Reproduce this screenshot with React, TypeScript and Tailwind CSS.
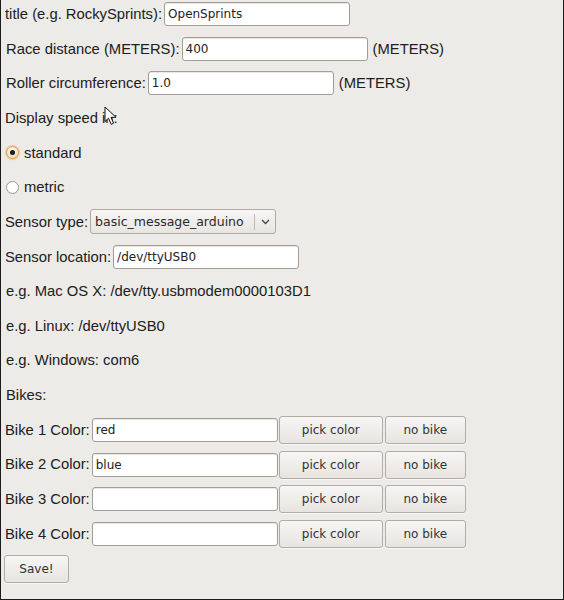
import React from "react";

const labelFont = { fontFamily: '"Liberation Sans", Arial, sans-serif' };
const fieldFont = { fontFamily: '"DejaVu Sans", Verdana, sans-serif' };

function TextBox({ value = "" }: { value?: string }) {
  return (
    <input
      readOnly
      value={value}
      style={fieldFont}
      className="ml-[2px] h-[24px] w-[186px] rounded-[3px] border border-[#a39d96] bg-white px-[3px] text-[12px] text-[#222] shadow-[inset_0_1px_1px_rgba(0,0,0,0.10)] outline-none"
    />
  );
}

function Btn({ children, width }: { children: React.ReactNode; width: string }) {
  return (
    <button
      style={fieldFont}
      className={`h-[28px] ${width} rounded-[3px] border border-[#b2aca5] bg-gradient-to-b from-[#f7f6f4] to-[#e7e4e0] text-[12px] text-[#2e3436] shadow-[0_1px_0_rgba(255,255,255,0.6)]`}
    >
      {children}
    </button>
  );
}

function Row({ children }: { children: React.ReactNode }) {
  return <div className="flex h-[24px] items-center whitespace-nowrap">{children}</div>;
}

function Radio({ checked }: { checked?: boolean }) {
  if (checked) {
    return (
      <span className="flex h-[13px] w-[13px] items-center justify-center rounded-full border border-[#e09a3c] bg-gradient-to-b from-[#fbf3e6] to-[#f1dcbc] shadow-[0_0_1px_1px_rgba(240,160,60,0.45)]">
        <span className="h-[5px] w-[5px] rounded-full bg-[#1f1f1f]" />
      </span>
    );
  }
  return <span className="h-[13px] w-[13px] rounded-full border border-[#9d978f] bg-white" />;
}

function Cursor() {
  return (
    <svg
      className="pointer-events-none absolute left-[103px] top-[106px]"
      width="14"
      height="20"
      viewBox="0 0 14 20"
    >
      <path
        d="M1 1 L1 15.5 L4.5 12.2 L7.2 18.3 L9.6 17.2 L7 11.3 L12 11.3 Z"
        fill="#fff"
        stroke="#111"
        strokeWidth="1"
        strokeLinejoin="round"
      />
    </svg>
  );
}

export default function App() {
  const bikes = ["red", "blue", "", ""];

  return (
    <div
      style={labelFont}
      className="relative box-border h-[600px] w-[564px] overflow-hidden border-x border-b border-[#1c1c1c] bg-[#edebe7] text-[14.8px] text-[#202020]"
    >
      <div className="flex flex-col gap-[10.67px] pl-[3px] pt-[2px]">
        <Row>
          <span className="pl-[1px]">title (e.g. RockySprints):</span>
          <TextBox value="OpenSprints" />
        </Row>
        <Row>
          <span className="pl-[2px]">Race distance (METERS):</span>
          <TextBox value="400" />
          <span className="ml-[5px]">(METERS)</span>
        </Row>
        <Row>
          <span className="pl-[2px]">Roller circumference:</span>
          <TextBox value="1.0" />
          <span className="ml-[5px]">(METERS)</span>
        </Row>
        <Row>
          <span className="pl-[1px]">Display speed in:</span>
        </Row>
        <Row>
          <span className="ml-[2px] mr-[5px] flex">
            <Radio checked />
          </span>
          <span>standard</span>
        </Row>
        <Row>
          <span className="ml-[2px] mr-[5px] flex">
            <Radio />
          </span>
          <span>metric</span>
        </Row>
        <Row>
          <span className="pl-[1px]">Sensor type:</span>
          <div
            style={fieldFont}
            className="ml-[2px] flex h-[25px] w-[186px] items-center rounded-[3px] border border-[#b0aaa3] bg-gradient-to-b from-[#f7f6f4] to-[#e8e5e1] text-[12.5px] text-[#2a2a2a]"
          >
            <span className="flex-1 pl-[4px]">basic_message_arduino</span>
            <span className="h-[16px] w-px bg-[#c2bcb5]" />
            <span className="flex w-[20px] justify-center">
              <svg width="9" height="6" viewBox="0 0 9 6">
                <path d="M1 1 L4.5 4.5 L8 1" fill="none" stroke="#444" strokeWidth="1.3" />
              </svg>
            </span>
          </div>
        </Row>
        <Row>
          <span className="pl-[1px]">Sensor location:</span>
          <TextBox value="/dev/ttyUSB0" />
        </Row>
        <Row>
          <span className="pl-[2px]">e.g. Mac OS X: /dev/tty.usbmodem0000103D1</span>
        </Row>
        <Row>
          <span className="pl-[2px]">e.g. Linux: /dev/ttyUSB0</span>
        </Row>
        <Row>
          <span className="pl-[2px]">e.g. Windows: com6</span>
        </Row>
        <Row>
          <span className="pl-[2px]">Bikes:</span>
        </Row>
        {bikes.map((color, i) => (
          <Row key={i}>
            <span className="pl-[1px]">Bike {i + 1} Color:</span>
            <TextBox value={color} />
            <span className="ml-[1px] flex gap-[2px]">
              <Btn width="w-[104px]">pick color</Btn>
              <Btn width="w-[81px]">no bike</Btn>
            </span>
          </Row>
        ))}
        <Row>
          <Btn width="w-[65px]">Save!</Btn>
        </Row>
      </div>
      <Cursor />
    </div>
  );
}
